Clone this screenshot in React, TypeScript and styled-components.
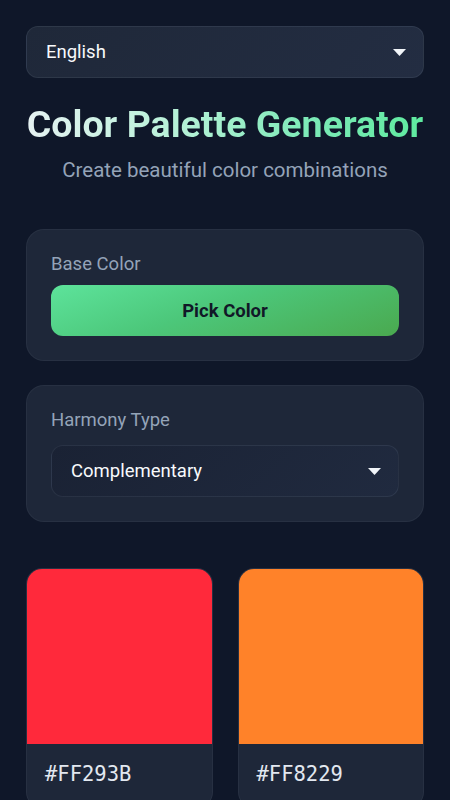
import React from "react";
import styled, { createGlobalStyle } from "styled-components";

const GlobalStyle = createGlobalStyle`
  html, body {
    margin: 0;
    padding: 0;
    background: #0f1729;
  }
  body {
    font-family: Roboto, "Noto Sans", sans-serif;
    color: #f1f5f9;
  }
  ::-webkit-scrollbar {
    width: 3px;
  }
  ::-webkit-scrollbar-track {
    background: #0f1729;
  }
  ::-webkit-scrollbar-thumb {
    background: #1e293b;
  }
`;

const Page = styled.div`
  min-height: 800px;
  padding: 26px 26px 40px;
  box-sizing: border-box;
  display: flex;
  flex-direction: column;
`;

const SelectBox = styled.div<{ $inset?: boolean }>`
  height: 52px;
  box-sizing: border-box;
  display: flex;
  align-items: center;
  justify-content: space-between;
  padding: 0 17px 0 19px;
  border-radius: 12px;
  border: 1px solid rgba(148, 163, 184, 0.12);
  background: ${(p) =>
    p.$inset
      ? "linear-gradient(135deg, #1a2234, #202a3f)"
      : "linear-gradient(135deg, #1f2839, #232d42)"};
  margin-top: ${(p) => (p.$inset ? 4 : 0)}px;
  font-size: 18.5px;
  color: #f8fafc;
`;

const Caret = styled.svg`
  width: 13px;
  height: 7px;
`;

const Title = styled.h1`
  margin: 24px 0 0;
  font-size: 37.5px;
  font-weight: 700;
  line-height: 44px;
  text-align: center;
  white-space: nowrap;
  background: linear-gradient(90deg, #e6f2f2 0%, #b4f1d6 40%, #7eeab8 70%, #5eea9f 100%);
  -webkit-background-clip: text;
  background-clip: text;
  color: transparent;
`;

const Subtitle = styled.p`
  margin: 11px 0 0;
  font-size: 20.5px;
  line-height: 26px;
  text-align: center;
  color: #94a3b8;
`;

const Card = styled.section<{ $top: number; $gap: number }>`
  margin-top: ${(p) => p.$top}px;
  padding: 23px 24px 24px;
  border-radius: 18px;
  border: 1px solid rgba(148, 163, 184, 0.08);
  background: #1e2739;
  display: flex;
  flex-direction: column;
  gap: ${(p) => p.$gap}px;
`;

const Label = styled.div`
  font-size: 18.5px;
  line-height: 22px;
  color: #94a3b8;
`;

const PickButton = styled.button`
  height: 51px;
  border: none;
  border-radius: 12px;
  background: linear-gradient(160deg, #5de39b 0%, #4cc77a 45%, #4aa94f 100%);
  font-family: Roboto, sans-serif;
  font-size: 18.5px;
  font-weight: 700;
  color: #111827;
  cursor: pointer;
`;

const Swatches = styled.div`
  margin-top: 46px;
  display: grid;
  grid-template-columns: 1fr 1fr;
  gap: 25px;
`;

const Swatch = styled.div`
  border-radius: 16px;
  overflow: hidden;
  background: #1e2739;
  border: 1px solid rgba(148, 163, 184, 0.08);
`;

const SwatchColor = styled.div<{ $color: string }>`
  height: 175px;
  background: ${(p) => p.$color};
`;

const SwatchInfo = styled.div`
  padding: 17px 18px 20px;
  font-family: "DejaVu Sans Mono", monospace;
  font-size: 20.5px;
  line-height: 26px;
  color: #e2e8f0;
`;

function DownCaret() {
  return (
    <Caret viewBox="0 0 13 7">
      <path d="M0 0 H13 L6.5 7 Z" fill="#f1f5f9" />
    </Caret>
  );
}

const palette = ["#FF293B", "#FF8229"];

export default function App() {
  return (
    <>
      <GlobalStyle />
      <Page>
        <SelectBox>
          <span>English</span>
          <DownCaret />
        </SelectBox>
        <Title>Color Palette Generator</Title>
        <Subtitle>Create beautiful color combinations</Subtitle>
        <Card $top={46} $gap={10}>
          <Label>Base Color</Label>
          <PickButton>Pick Color</PickButton>
        </Card>
        <Card $top={24} $gap={10}>
          <Label>Harmony Type</Label>
          <SelectBox $inset>
            <span>Complementary</span>
            <DownCaret />
          </SelectBox>
        </Card>
        <Swatches>
          {palette.map((c) => (
            <Swatch key={c}>
              <SwatchColor $color={c} />
              <SwatchInfo>{c}</SwatchInfo>
            </Swatch>
          ))}
        </Swatches>
      </Page>
    </>
  );
}
